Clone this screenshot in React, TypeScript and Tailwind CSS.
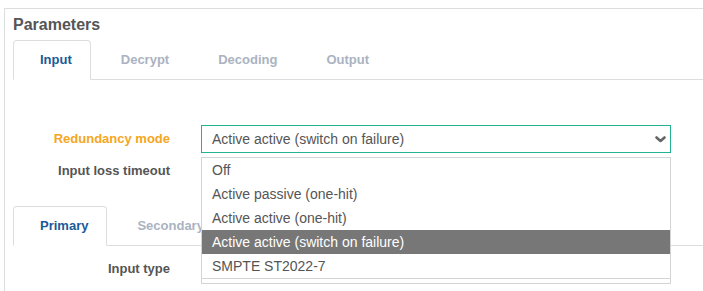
import React from 'react';

const TabBar: React.FC<{ items: string[]; active: string }> = ({ items, active }) => (
    <div className="flex border-b border-[#dddddd]">
        {items.map((t) => (
            <div
                key={t}
                className={
                    t === active
                        ? 'h-[40px] -mb-px mr-[3px] pl-[26px] pr-[18px] flex items-center text-[13px] font-bold rounded-t-[4px] border border-[#dddddd] border-b-white bg-white text-[#1a5a98]'
                        : 'h-[40px] -mb-px mr-[3px] pl-[26px] pr-[18px] flex items-center text-[13px] font-bold rounded-t-[4px] border border-transparent text-[#aab3c1]'
                }
            >
                {t}
            </div>
        ))}
    </div>
);

const options = [
    'Off',
    'Active passive (one-hit)',
    'Active active (one-hit)',
    'Active active (switch on failure)',
    'SMPTE ST2022-7',
];

export default function App() {
    const selected = 'Active active (switch on failure)';

    return (
        <div
            className="w-[703px] h-[291px] overflow-hidden bg-white"
            style={{ fontFamily: '"Liberation Sans", Arial, sans-serif' }}
        >
            <div className="ml-[4px] mt-[8px] w-[760px] h-[400px] border border-[#dddddd] px-[8px] pt-[6px]">
                <h3 className="text-[16px] leading-[20px] font-bold text-[#555555]">Parameters</h3>
                <div className="mt-[5px]">
                    <TabBar items={['Input', 'Decrypt', 'Decoding', 'Output']} active="Input" />
                </div>

                <div className="pt-[45px]">
                    <div className="flex items-center h-[28px]">
                        <label className="w-[157px] mr-[31px] text-right text-[13px] font-bold text-[#f5a623]">
                            Redundancy mode
                        </label>
                        <div className="relative w-[470px] h-[28px]">
                            <div className="h-full flex items-center justify-between border border-[#22b38f] pl-[10px] pr-[4px] text-[14px] text-[#555555]">
                                <span>{selected}</span>
                                <svg width="11" height="7" viewBox="0 0 11 7" fill="none">
                                    <polyline
                                        points="1.5,1.5 5.5,5 9.5,1.5"
                                        stroke="#666666"
                                        strokeWidth="2.6"
                                        strokeLinecap="round"
                                        strokeLinejoin="round"
                                    />
                                </svg>
                            </div>
                            <div className="absolute left-0 top-[32px] z-10 w-[470px] border border-[#d4d4d4] bg-white">
                                <div className="border-b border-[#d4d4d4]">
                                    {options.map((o) => (
                                        <div
                                            key={o}
                                            className={
                                                o === selected
                                                    ? 'h-[24px] flex items-center pl-[10px] text-[14px] bg-[#777777] text-white'
                                                    : 'h-[24px] flex items-center pl-[10px] text-[14px] text-[#555555]'
                                            }
                                        >
                                            {o}
                                        </div>
                                    ))}
                                </div>
                                <div className="h-[4px]" />
                            </div>
                        </div>
                    </div>

                    <div className="mt-[4px] flex items-center h-[28px]">
                        <label className="w-[157px] mr-[31px] text-right text-[13px] font-bold text-[#555555]">
                            Input loss timeout
                        </label>
                        <div className="w-[470px] h-[28px] border border-[#cccccc]" />
                    </div>

                    <div className="mt-[21px]">
                        <TabBar items={['Primary', 'Secondary']} active="Primary" />
                    </div>

                    <div className="mt-[9px] flex items-center h-[28px]">
                        <label className="w-[157px] mr-[31px] text-right text-[13px] font-bold text-[#555555]">
                            Input type
                        </label>
                        <div className="w-[470px] h-[28px] border border-[#cccccc]" />
                    </div>
                </div>
            </div>
        </div>
    );
}
